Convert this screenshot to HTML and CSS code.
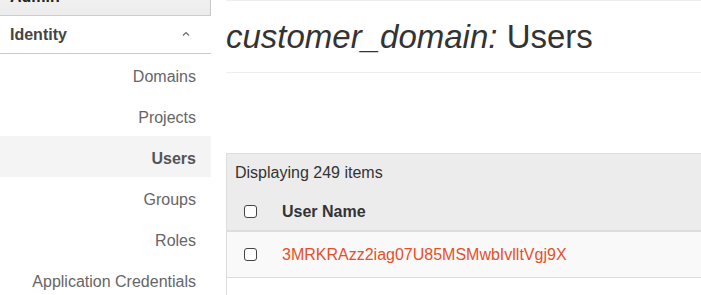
FILE: index.html
```
<!DOCTYPE html>
<html lang="en">
<head>
<meta charset="utf-8">
<title>Users</title>
<link rel="stylesheet" href="styles.css">
</head>
<body>
<div class="layout">
  <aside class="sidebar">
    <div class="group group-closed">Admin</div>
    <div class="group group-open">
      <span>Identity</span>
      <svg class="caret" width="8" height="5" viewBox="0 0 8 5"><path d="M1 4.5 L4 1.5 L7 4.5" fill="none" stroke="#666" stroke-width="1.1"/></svg>
    </div>
    <ul class="items">
      <li class="item">Domains</li>
      <li class="item">Projects</li>
      <li class="item active">Users</li>
      <li class="item">Groups</li>
      <li class="item">Roles</li>
      <li class="item">Application Credentials</li>
    </ul>
  </aside>
  <main class="main">
    <div class="page-header">
      <h1 class="title"><em>customer_domain:</em> Users</h1>
    </div>
    <table class="table">
      <thead>
        <tr class="caption-row"><th colspan="2" class="caption">Displaying 249 items</th></tr>
        <tr class="head-row">
          <th class="col-check"><span class="checkbox"></span></th>
          <th class="col-name">User Name</th>
        </tr>
      </thead>
      <tbody>
        <tr class="body-row">
          <td class="col-check"><span class="checkbox"></span></td>
          <td class="col-name"><a class="link" href="#">3MRKRAzz2iag07U85MSMwbIvlltVgj9X</a></td>
        </tr>
        <tr class="empty-row"><td colspan="2"></td></tr>
      </tbody>
    </table>
  </main>
</div>
</body>
</html>
```
FILE: styles.css
```
html, body {
  margin: 0;
  padding: 0;
  background: #fff;
}
body {
  font-family: "Liberation Sans", Arial, Helvetica, sans-serif;
  font-size: 16px;
  color: #333;
  overflow: hidden;
}
.layout {
  display: flex;
  align-items: flex-start;
}
.sidebar {
  width: 211px;
  flex-shrink: 0;
  margin-top: -22px;
}
.group {
  height: 37px;
  line-height: 37px;
  padding: 0 10px;
  font-weight: bold;
  color: #444;
  border-bottom: 1px solid #ccc;
  display: flex;
  justify-content: space-between;
  align-items: center;
}
.group-closed {
  background: linear-gradient(#f6f6f6, #ececec);
  border-right: 1px solid #c8c8c8;
  color: #222;
}
.group-open {
  width: 191px;
}
.caret {
  margin-right: 11px;
  margin-top: -3px;
}
.items {
  list-style: none;
  margin: 0;
  padding: 0;
}
.item {
  height: 41px;
  line-height: 46px;
  padding-right: 15px;
  text-align: right;
  color: #666;
}
.item.active {
  background: #f4f4f4;
  font-weight: bold;
  color: #555;
}
.main {
  flex: 1;
  min-width: 0;
  padding-left: 15px;
}
.page-header {
  border-top: 1px solid #eee;
  border-bottom: 1px solid #eee;
  padding: 18px 0 17px;
}
.title {
  margin: 0;
  font-size: 33px;
  font-weight: normal;
  line-height: 36px;
  color: #333;
}
.title em {
  font-style: italic;
}
.table {
  margin-top: 80px;
  width: calc(100% + 10px);
  border-collapse: collapse;
  border-left: 1px solid #ddd;
}
.caption-row th,
.head-row th {
  background: #ececec;
}
.caption {
  border-top: 1px solid #ddd;
  text-align: left;
  font-weight: normal;
  color: #333;
  padding: 9px 8px 7px;
  height: 20px;
  line-height: 20px;
}
.head-row th {
  border-bottom: 2px solid #ddd;
  height: 20px;
  line-height: 20px;
  padding: 12px 6px 8px;
  text-align: left;
  font-weight: bold;
  color: #333;
}
.col-check {
  width: 32px;
}
.table .col-check {
  padding-left: 17px;
  padding-right: 0;
}
.body-row td {
  background: #f9f9f9;
  border-bottom: 1px solid #ddd;
  height: 20px;
  line-height: 20px;
  padding: 13px 6px 12px;
}
.table .body-row .col-check {
  padding-left: 17px;
  padding-right: 0;
}
.checkbox {
  display: inline-block;
  width: 11px;
  height: 11px;
  border: 1px solid #444;
  border-radius: 3px;
  background: #fff;
  vertical-align: middle;
  margin-top: -2px;
}
.link {
  color: #e5502b;
  text-decoration: none;
}
.empty-row td {
  height: 40px;
  padding: 0;
}
```
